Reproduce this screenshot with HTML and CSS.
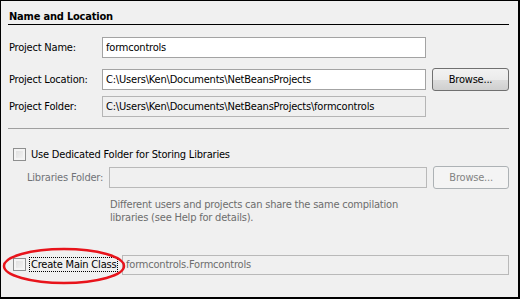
FILE: index.html
```html
<!DOCTYPE html>
<html lang="en">

<head>
    <meta charset="UTF-8">
    <title>Name and Location</title>
    <link rel="stylesheet" href="styles.css">
</head>

<body>

    <div class="dialog">
        <!-- Header -->
        <div class="header">Name and Location</div>

        <!-- Project fields -->
        <div class="row row-name">
            <label class="label" for="name">Project Name:</label>
            <input class="field" id="name" type="text" value="formcontrols">
        </div>
        <div class="row row-location">
            <label class="label" for="location">Project Location:</label>
            <input class="field" id="location" type="text" value="C:\Users\Ken\Documents\NetBeansProjects">
            <button class="btn">Browse...</button>
        </div>
        <div class="row row-folder">
            <label class="label" for="folder">Project Folder:</label>
            <input class="field readonly" id="folder" type="text" value="C:\Users\Ken\Documents\NetBeansProjects\formcontrols" readonly>
        </div>

        <div class="separator"></div>

        <!-- Libraries -->
        <div class="check-row row-dedicated">
            <span class="checkbox"></span>
            <span class="check-label">Use Dedicated Folder for Storing Libraries</span>
        </div>
        <div class="row row-libraries">
            <label class="label label-libs disabled-text">Libraries Folder:</label>
            <input class="field disabled" type="text" disabled>
            <button class="btn" disabled>Browse...</button>
        </div>
        <p class="hint">Different users and projects can share the same compilation<br>libraries (see Help for details).</p>

        <!-- Main class -->
        <div class="check-row row-main">
            <span class="checkbox"></span>
            <span class="check-label focused">Create Main Class</span>
            <input class="field disabled main-field" type="text" value="formcontrols.Formcontrols" disabled>
        </div>

        <!-- Red highlight -->
        <svg class="highlight" width="130" height="42" viewBox="0 0 130 42">
            <ellipse cx="63" cy="20" rx="60" ry="17" fill="none" stroke="#e8141b" stroke-width="2.5" />
        </svg>
    </div>

</body>

</html>
```

FILE: styles.css
```css
/* Basis */
html,
body {
    margin: 0;
    padding: 0;
    background: #ffffff;
}

.dialog {
    position: relative;
    box-sizing: border-box;
    width: 520px;
    height: 299px;
    border-left: 1px solid #000;
    border-top: 1px solid #000;
    border-right: 2px solid #000;
    border-bottom: 2px solid #000;
    background: #f0f0f0;
    padding: 0 9px 0 7px;
    font-family: "DejaVu Sans Condensed", "DejaVu Sans", sans-serif;
    font-size: 11px;
    letter-spacing: -0.2px;
    color: #000;
    display: flex;
    flex-direction: column;
}

/* Header met lijn */
.header {
    margin-top: 8px;
    height: 15px;
    line-height: 15px;
    padding-left: 1px;
    font-weight: bold;
    border-bottom: 1px solid #000;
}

/* Rijen */
.row {
    display: flex;
    align-items: center;
    height: 23px;
}

.row-name {
    margin-top: 11px;
}

.row-location {
    margin-top: 9px;
}

.row-folder {
    margin-top: 4px;
}

.label {
    width: 93px;
    padding-left: 1px;
    white-space: nowrap;
}

.label-libs {
    width: 83px;
    padding-left: 19px;
}

.disabled-text {
    color: #707378;
}

.field {
    box-sizing: border-box;
    width: 324px;
    height: 21px;
    margin: 0;
    padding: 0 3px;
    border: 1px solid #a3a3a3;
    background: #fff;
    font-family: inherit;
    font-size: 11px;
    letter-spacing: inherit;
    color: #000;
    outline: none;
}

.field.readonly {
    background: #f0f0f0;
    border-color: #b5b5b5;
}

.field.disabled {
    background: #f0f0f0;
    border-color: #b9b9b9;
    color: #6d6d6d;
}

/* Knoppen */
.btn {
    box-sizing: border-box;
    width: 77px;
    height: 23px;
    margin-left: 6px;
    padding: 0;
    border: 1px solid #707070;
    border-radius: 3px;
    background: linear-gradient(#f2f2f2 0%, #ebebeb 50%, #dddddd 51%, #cfcfcf 100%);
    font-family: inherit;
    font-size: 11px;
    letter-spacing: inherit;
    color: #000;
}

.btn:disabled {
    border-color: #adb2b5;
    background: #f4f4f4;
    color: #838383;
}

.separator {
    margin-top: 10px;
    height: 1px;
    background: #a0a0a0;
}

/* Checkboxen */
.check-row {
    display: flex;
    align-items: center;
    padding-left: 5px;
}

.row-dedicated {
    margin-top: 18px;
    height: 15px;
}

.row-libraries {
    margin-top: 4px;
}

.row-main {
    margin-top: 30px;
    height: 21px;
}

.checkbox {
    flex: none;
    box-sizing: border-box;
    width: 13px;
    height: 13px;
    border: 1px solid #8e8f8f;
    background: linear-gradient(135deg, #dcdcdc, #f6f6f6);
    box-shadow: inset 0 0 0 2px #f4f4f4;
}

.check-label {
    flex: none;
    margin-left: 3px;
    padding: 0 1px;
    line-height: 13px;
    white-space: nowrap;
    border: 1px dotted transparent;
}

.check-label.focused {
    box-sizing: border-box;
    width: 89px;
    overflow: hidden;
    border-color: #000;
}

.main-field {
    flex: none;
    width: 387px;
    margin-left: 4px;
    height: 20px;
}

.hint {
    margin: 9px 0 0 102px;
    line-height: 13px;
    color: #6d6d6d;
}

/* Rode markering */
.highlight {
    position: absolute;
    left: 0;
    top: 245px;
}
```
